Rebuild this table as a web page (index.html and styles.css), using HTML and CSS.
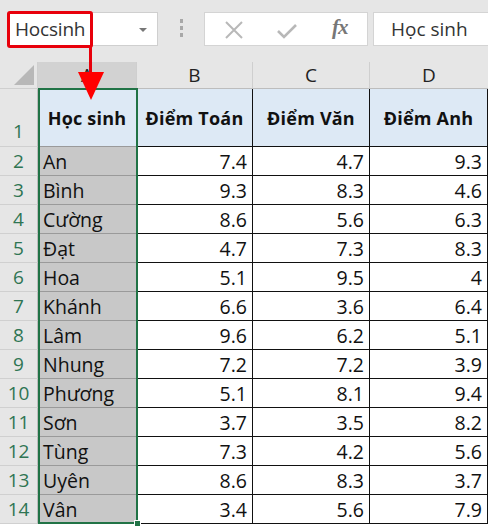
FILE: index.html
```html
<!DOCTYPE html>
<html>
<head>
<meta charset="utf-8">
<link rel="stylesheet" href="styles.css">
</head>
<body>
<div class="app">
  <div class="fbar">
    <div class="namebox">
      <span class="name">Hocsinh</span>
      <span class="dd"></span>
    </div>
    <div class="sep"><i></i><i></i><i></i></div>
    <div class="btns">
      <svg class="ico x" width="20" height="20" viewBox="0 0 20 20"><path d="M2 2L18 18M18 2L2 18" stroke="#b8b8b8" stroke-width="2" fill="none"/></svg>
      <svg class="ico ok" width="22" height="18" viewBox="0 0 22 18"><path d="M2 9L8 15L20 3" stroke="#b8b8b8" stroke-width="2.6" fill="none"/></svg>
      <span class="fx">fx</span>
    </div>
    <div class="content">Học sinh</div>
  </div>
  <div class="sheet">
    <div class="corner"><span class="tri"></span></div>
    <div class="ch sel">A</div>
    <div class="ch">B</div>
    <div class="ch">C</div>
    <div class="ch last">D</div>

    <div class="rh r1">1</div>
    <div class="c hd a">Học sinh</div>
    <div class="c hd">Điểm Toán</div>
    <div class="c hd">Điểm Văn</div>
    <div class="c hd">Điểm Anh</div>

    <div class="rh">2</div><div class="c a">An</div><div class="c n">7.4</div><div class="c n">4.7</div><div class="c n">9.3</div>
    <div class="rh">3</div><div class="c a">Bình</div><div class="c n">9.3</div><div class="c n">8.3</div><div class="c n">4.6</div>
    <div class="rh">4</div><div class="c a">Cường</div><div class="c n">8.6</div><div class="c n">5.6</div><div class="c n">6.3</div>
    <div class="rh">5</div><div class="c a">Đạt</div><div class="c n">4.7</div><div class="c n">7.3</div><div class="c n">8.3</div>
    <div class="rh">6</div><div class="c a">Hoa</div><div class="c n">5.1</div><div class="c n">9.5</div><div class="c n">4</div>
    <div class="rh">7</div><div class="c a">Khánh</div><div class="c n">6.6</div><div class="c n">3.6</div><div class="c n">6.4</div>
    <div class="rh">8</div><div class="c a">Lâm</div><div class="c n">9.6</div><div class="c n">6.2</div><div class="c n">5.1</div>
    <div class="rh">9</div><div class="c a">Nhung</div><div class="c n">7.2</div><div class="c n">7.2</div><div class="c n">3.9</div>
    <div class="rh">10</div><div class="c a">Phương</div><div class="c n">5.1</div><div class="c n">8.1</div><div class="c n">9.4</div>
    <div class="rh">11</div><div class="c a">Sơn</div><div class="c n">3.7</div><div class="c n">3.5</div><div class="c n">8.2</div>
    <div class="rh">12</div><div class="c a">Tùng</div><div class="c n">7.3</div><div class="c n">4.2</div><div class="c n">5.6</div>
    <div class="rh">13</div><div class="c a">Uyên</div><div class="c n">8.6</div><div class="c n">8.3</div><div class="c n">3.7</div>
    <div class="rh">14</div><div class="c a">Vân</div><div class="c n">3.4</div><div class="c n">5.6</div><div class="c n">7.9</div>

    <div class="selbox"><span class="handle"></span></div>
  </div>
  <div class="redbox"></div>
  <div class="arrow">
    <span class="shaft"></span>
    <span class="head"></span>
  </div>
</div>
</body>
</html>
```
FILE: styles.css
```css
* { box-sizing: border-box; margin: 0; padding: 0; }
html, body { width: 488px; height: 526px; overflow: hidden; background: #fff; }
body { font-family: "Open Sans", "Noto Sans", sans-serif; color: #111; }
.app { position: relative; width: 488px; height: 526px; overflow: hidden; }

.fbar {
  height: 62px;
  background: #e6e6e6;
  display: flex;
  align-items: flex-start;
  padding-top: 12px;
  padding-left: 8px;
}
.namebox {
  width: 150px; height: 34px;
  background: #fff;
  border: 1px solid #cfcfcf;
  display: flex; align-items: center;
  padding-left: 6px;
  position: relative;
}
.name { font-size: 19px; color: #333; letter-spacing: -0.2px; }
.dd {
  position: absolute; right: 10px; top: 15px;
  border-left: 4px solid transparent; border-right: 4px solid transparent;
  border-top: 4px solid #777;
}
.sep { width: 46px; display: flex; flex-direction: column; align-items: center; gap: 3px; padding-top: 7px; }
.sep i { width: 3px; height: 4px; background: #a8a8a8; display: block; }
.btns {
  width: 164px; height: 34px;
  background: #fff; border: 1px solid #d4d4d4;
  display: flex; align-items: center;
  position: relative;
}
.ico { position: absolute; }
.ico.x { left: 19px; top: 7px; }
.ico.ok { left: 71px; top: 9px; }
.fx {
  position: absolute; left: 127px; top: 2px;
  font-family: "Liberation Serif", serif; font-style: italic; font-weight: bold;
  font-size: 21px; color: #777; letter-spacing: -1px;
}
.content {
  margin-left: 5px;
  flex: 1; height: 34px;
  background: #fff; border: 1px solid #d4d4d4; border-right: none;
  display: flex; align-items: center; padding-left: 17px;
  font-size: 19px; color: #333;
}

.sheet {
  position: relative;
  display: grid;
  grid-template-columns: 38px 99px 116px 117px 118px;
  grid-template-rows: 27px 58px repeat(13, 29px);
}
.corner { background: #e6e6e6; border-right: 1px solid #cfcfcf; border-bottom: 1px solid #cfcfcf; position: relative; }
.tri {
  position: absolute; right: 3px; bottom: 3px;
  border-left: 20px solid transparent; border-bottom: 20px solid #b8b8b8;
}
.ch {
  background: #e6e6e6;
  border-right: 1px solid #cfcfcf;
  border-bottom: 1px solid #bdbdbd;
  display: flex; align-items: center; justify-content: center;
  font-size: 19px; color: #222;
}
.ch.sel { background: #d2d2d2; }
.ch.last { border-right: none; }
.rh {
  background: #e6e6e6;
  border-right: 1px solid #bdbdbd;
  border-bottom: 1px solid #d0d0d0;
  display: flex; align-items: center; justify-content: center;
  font-size: 19px; color: #2f7553;
}
.rh.r1 { align-items: flex-end; padding-bottom: 2px; }
.c {
  border-right: 1px solid #111;
  border-bottom: 1px solid #111;
  font-size: 19.5px;
  display: flex; align-items: center;
  padding: 0 5px;
  white-space: nowrap;
}
.c.hd { background: #dde9f5; font-weight: bold; justify-content: center; font-size: 18px; letter-spacing: 0.2px; }
.c.a { background: #c8c8c8; border-right-color: #c8c8c8; border-bottom-color: #9a9a9a; }
.c.hd.a { background: #dde9f5; }
.c.n { justify-content: flex-end; }

.selbox {
  position: absolute;
  left: 38px; top: 26px;
  width: 100px; height: 436px;
  border: 2px solid #217346;
  pointer-events: none;
}
.handle {
  position: absolute; right: -5px; bottom: -5px;
  width: 7px; height: 7px; background: #217346; border: 1px solid #fff;
}

.redbox {
  position: absolute; left: 7px; top: 11px;
  width: 86px; height: 37px;
  border: 3px solid #e8000b; border-radius: 3px;
}
.arrow { position: absolute; left: 78px; top: 46px; width: 27px; height: 55px; }
.shaft { position: absolute; left: 11px; top: 0; width: 3px; height: 28px; background: #e8000b; }
.head {
  position: absolute; left: 0; top: 26px;
  border-left: 13px solid transparent; border-right: 13px solid transparent;
  border-top: 28px solid #ff0000;
}
```
